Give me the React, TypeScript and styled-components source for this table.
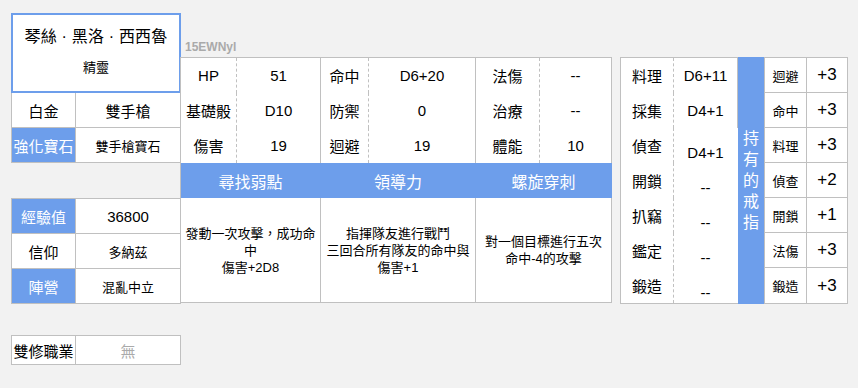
import React from "react";
import styled, { createGlobalStyle } from "styled-components";

const BLUE = "#6d9eeb";
const LINE = "#c0c0c0";

const GlobalStyle = createGlobalStyle`
  body {
    margin: 0;
    background: #f2f2f2;
    font-family: "Liberation Sans", "Noto Sans CJK TC", sans-serif;
    color: #000;
  }
  * { box-sizing: border-box; }
`;

const Sheet = styled.div`
  display: flex;
  align-items: flex-start;
  padding: 13px 0 0 11px;
`;

/* ---------- left column: identity ---------- */

const LeftCol = styled.div`
  width: 170px;
  display: flex;
  flex-direction: column;
`;

const NameCard = styled.div`
  height: 80px;
  border: 2px solid ${BLUE};
  background: #fff;
  display: flex;
  flex-direction: column;
  align-items: center;
  padding-top: 12px;
`;

const CharName = styled.div`
  font-size: 16px;
  line-height: 20px;
  letter-spacing: 0.2px;
`;

const Race = styled.div`
  margin-top: 13px;
  font-size: 13px;
  line-height: 16px;
`;

const PairGrid = styled.div<{ $gap?: number; $top?: boolean }>`
  display: grid;
  grid-template-columns: 64px 105px;
  margin-top: ${(p) => p.$gap ?? 0}px;
  border-left: 1px solid ${LINE};
  border-top: ${(p) => (p.$top ? `1px solid ${LINE}` : "none")};
`;

const PairCell = styled.div<{ $blue?: boolean; $small?: boolean; $muted?: boolean; $h?: number }>`
  height: ${(p) => p.$h ?? 35}px;
  display: flex;
  align-items: center;
  justify-content: center;
  border-right: 1px solid ${LINE};
  border-bottom: 1px solid ${LINE};
  background: ${(p) => (p.$blue ? BLUE : "#fff")};
  color: ${(p) => (p.$blue ? "#fff" : p.$muted ? "#aaa" : "#000")};
  font-size: ${(p) => (p.$small ? 13 : 15)}px;
  white-space: nowrap;
`;

/* ---------- middle column: stats and skills ---------- */

const MidCol = styled.div`
  width: 432px;
  margin-left: -1px;
`;

const Code = styled.div`
  margin-top: 27px;
  height: 17px;
  padding-left: 5px;
  font-size: 12px;
  line-height: 14px;
  font-weight: bold;
  color: #aaa;
`;

const StatGrid = styled.div`
  display: grid;
  grid-template-columns: 56px 84px 48px 107px 64px 72px;
  grid-auto-rows: 35px;
  border-top: 1px solid ${LINE};
  border-left: 1px solid ${LINE};
  background: #fff;
`;

const StatCell = styled.div<{ $line: "dashed" | "solid" }>`
  display: flex;
  align-items: center;
  justify-content: center;
  font-size: 15px;
  border-right: 1px ${(p) => p.$line} ${LINE};
`;

const SkillName = styled.div`
  grid-column: span 2;
  display: flex;
  align-items: center;
  justify-content: center;
  background: ${BLUE};
  color: #fff;
  font-size: 16px;
  border-right: 1px solid ${BLUE};
  &:last-of-type {
    border-right-color: ${LINE};
  }
`;

const SkillDesc = styled.div`
  grid-column: span 2;
  grid-row: span 3;
  display: flex;
  flex-direction: column;
  align-items: center;
  justify-content: center;
  font-size: 13px;
  line-height: 17px;
  text-align: center;
  border-right: 1px solid ${LINE};
  border-bottom: 1px solid ${LINE};
`;

/* ---------- right column: trades and rings ---------- */

const RightCol = styled.div`
  display: flex;
  margin: 44px 0 0 8px;
`;

const TradeGrid = styled.div`
  display: grid;
  grid-template-columns: 53px 64px;
  grid-auto-rows: 35px;
  border: 1px solid ${LINE};
  border-right: none;
  background: #fff;
`;

const TradeLabel = styled.div`
  display: flex;
  align-items: center;
  justify-content: center;
  font-size: 15px;
  border-right: 1px dashed ${LINE};
`;

const TradeValue = styled.div<{ $drop?: boolean }>`
  display: flex;
  align-items: center;
  justify-content: center;
  font-size: 15px;
  padding-top: ${(p) => (p.$drop ? 13 : 0)}px;
  border-right: 1px solid ${(p) => (p.$drop ? "#fff" : LINE)};
`;

const RingTitle = styled.div`
  width: 26px;
  background: ${BLUE};
  color: #fff;
  display: flex;
  align-items: center;
  justify-content: center;
  font-size: 16px;
  line-height: 21px;
  text-align: center;

  span {
    width: 1em;
  }
`;

const RingGrid = styled.div`
  display: grid;
  grid-template-columns: 42px 41px;
  grid-auto-rows: 35px;
  border-top: 1px solid ${LINE};
  border-bottom: 1px solid ${LINE};
  border-left: 1px solid ${LINE};
  background: #fff;

  & > div:nth-last-child(-n + 2) {
    border-bottom: none;
  }
`;

const RingCell = styled.div<{ $big?: boolean }>`
  display: flex;
  align-items: center;
  justify-content: center;
  font-size: ${(p) => (p.$big ? 17 : 13)}px;
  border-right: 1px solid ${LINE};
  border-bottom: 1px solid ${LINE};
`;

const stats: [string, string][][] = [
  [["HP", "51"], ["命中", "D6+20"], ["法傷", "--"]],
  [["基礎骰", "D10"], ["防禦", "0"], ["治療", "--"]],
  [["傷害", "19"], ["迴避", "19"], ["體能", "10"]],
];

const skills = [
  { name: "尋找弱點", lines: ["發動一次攻擊，成功命", "中", "傷害+2D8"] },
  { name: "領導力", lines: ["指揮隊友進行戰鬥", "三回合所有隊友的命中與", "傷害+1"] },
  { name: "螺旋穿刺", lines: ["對一個目標進行五次", "命中-4的攻擊"] },
];

const trades: [string, string][] = [
  ["料理", "D6+11"],
  ["採集", "D4+1"],
  ["偵查", "D4+1"],
  ["開鎖", "--"],
  ["扒竊", "--"],
  ["鑑定", "--"],
  ["鍛造", "--"],
];

const rings: [string, string][] = [
  ["迴避", "+3"],
  ["命中", "+3"],
  ["料理", "+3"],
  ["偵查", "+2"],
  ["開鎖", "+1"],
  ["法傷", "+3"],
  ["鍛造", "+3"],
];

export default function App() {
  return (
    <>
      <GlobalStyle />
      <Sheet>
        <LeftCol>
          <NameCard>
            <CharName>琴絲 · 黑洛 · 西西魯</CharName>
            <Race>精靈</Race>
          </NameCard>
          <PairGrid>
            <PairCell>白金</PairCell>
            <PairCell>雙手槍</PairCell>
            <PairCell $blue>強化寶石</PairCell>
            <PairCell $small>雙手槍寶石</PairCell>
          </PairGrid>
          <PairGrid $gap={35} $top>
            <PairCell $blue>經驗值</PairCell>
            <PairCell>36800</PairCell>
            <PairCell>信仰</PairCell>
            <PairCell $small>多納茲</PairCell>
            <PairCell $blue>陣營</PairCell>
            <PairCell $small>混亂中立</PairCell>
          </PairGrid>
          <PairGrid $gap={31} $top>
            <PairCell $h={29}>雙修職業</PairCell>
            <PairCell $h={29} $muted>無</PairCell>
          </PairGrid>
        </LeftCol>

        <MidCol>
          <Code>15EWNyl</Code>
          <StatGrid>
            {stats.map((row) =>
              row.map(([label, value]) => (
                <React.Fragment key={label}>
                  <StatCell $line="dashed">{label}</StatCell>
                  <StatCell $line="solid">{value}</StatCell>
                </React.Fragment>
              ))
            )}
            {skills.map((s) => (
              <SkillName key={s.name}>{s.name}</SkillName>
            ))}
            {skills.map((s) => (
              <SkillDesc key={s.name}>
                {s.lines.map((l) => (
                  <div key={l}>{l}</div>
                ))}
              </SkillDesc>
            ))}
          </StatGrid>
        </MidCol>

        <RightCol>
          <TradeGrid>
            {trades.map(([label, value], i) => (
              <React.Fragment key={label}>
                <TradeLabel>{label}</TradeLabel>
                <TradeValue $drop={i > 1}>{value}</TradeValue>
              </React.Fragment>
            ))}
          </TradeGrid>
          <RingTitle>
            <span>持有的戒指</span>
          </RingTitle>
          <RingGrid>
            {rings.map(([label, value]) => (
              <React.Fragment key={label}>
                <RingCell>{label}</RingCell>
                <RingCell $big>{value}</RingCell>
              </React.Fragment>
            ))}
          </RingGrid>
        </RightCol>
      </Sheet>
    </>
  );
}
